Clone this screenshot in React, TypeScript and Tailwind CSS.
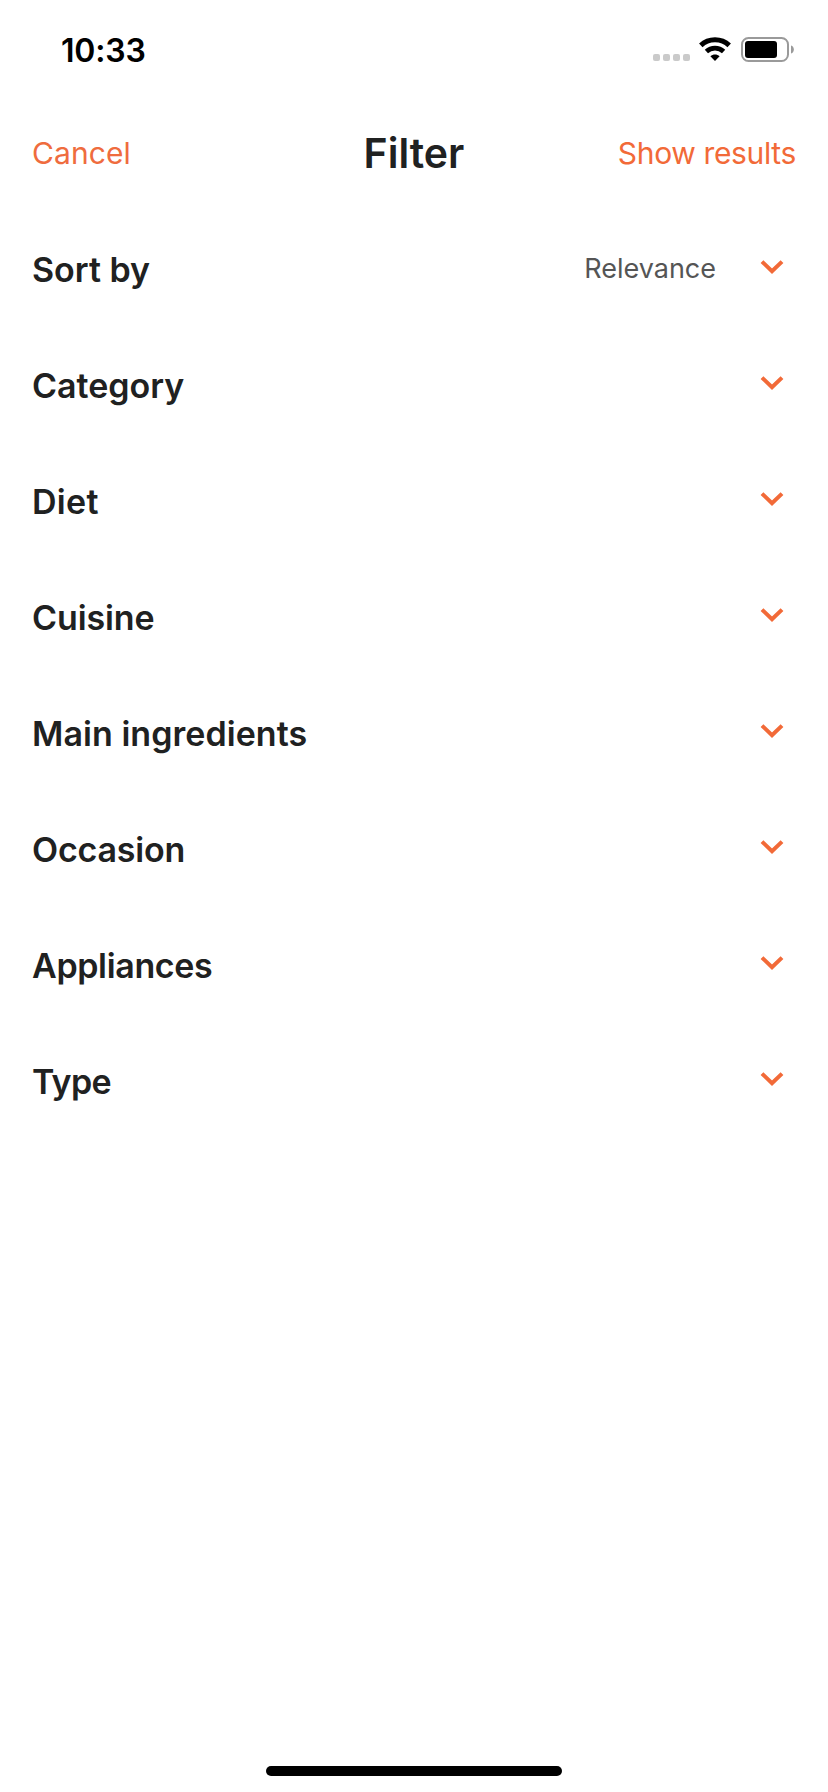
const filters = [
  { label: "Sort by", value: "Relevance", tracking: "tracking-normal" },
  { label: "Category", tracking: "tracking-normal" },
  { label: "Diet", tracking: "tracking-[0.3px]" },
  { label: "Cuisine", tracking: "tracking-[-0.1px]" },
  { label: "Main ingredients", tracking: "tracking-[0.05px]" },
  { label: "Occasion", tracking: "tracking-[-0.2px]" },
  { label: "Appliances", tracking: "tracking-[-0.35px]" },
  { label: "Type", tracking: "tracking-[-0.7px]" },
];

function WifiIcon() {
  return (
    <svg width="32" height="24" viewBox="0 0 32 24" fill="none">
      <path d="M1.8 8.4C9.6 0.9 22.4 0.9 30.2 8.4" stroke="#000" strokeWidth="5" />
      <path d="M7.4 14.4C12.2 10 19.8 10 24.6 14.4" stroke="#000" strokeWidth="4.8" />
      <path d="M11.4 19.2C14 16.8 18 16.8 20.6 19.2L16 24Z" fill="#000" />
    </svg>
  );
}

function BatteryIcon() {
  return (
    <svg width="53" height="25" viewBox="0 0 53 25" fill="none">
      <rect x="1" y="1" width="46" height="23" rx="6.5" stroke="#9a9a9a" strokeWidth="2" />
      <rect x="4" y="4" width="32" height="17" rx="3" fill="#000" />
      <path d="M50 8.5C53.8 9.6 53.8 15.4 50 16.5Z" fill="#9a9a9a" />
    </svg>
  );
}

function ChevronIcon() {
  return (
    <svg width="24" height="16" viewBox="0 0 24 16" fill="none">
      <path d="M2 2.6L12 12.2L22 2.6" stroke="#f26a38" strokeWidth="4" />
    </svg>
  );
}

function StatusBar() {
  return (
    <div className="flex h-[99px] items-center justify-between pl-[61px] pr-[34px]">
      <span className="pt-[3px] text-[32px] font-semibold leading-none tracking-[-0.2px] text-black">
        10:33
      </span>
      <div className="flex h-[25px] items-end">
        <div className="mr-[9px] flex gap-[3px] pb-px">
          {[0, 1, 2, 3].map((dot) => (
            <div key={dot} className="size-[7px] rounded-[2px] bg-[#cacaca]" />
          ))}
        </div>
        <div className="mr-[10px] self-start">
          <WifiIcon />
        </div>
        <BatteryIcon />
      </div>
    </div>
  );
}

export default function App() {
  return (
    <div className="flex h-[1792px] w-[828px] flex-col bg-white font-['Inter',sans-serif] text-[#202121]">
      <StatusBar />

      {/* Header */}
      <header className="grid h-[113px] grid-cols-3 items-start px-8 pt-[29px] leading-[50px]">
        <button className="text-left text-[30px] tracking-[0.1px] text-[#ef6c3e]">Cancel</button>
        <h1 className="text-center text-[41px] font-semibold">Filter</h1>
        <button className="whitespace-nowrap text-right text-[30px] tracking-[-0.35px] text-[#f26a38]">
          Show results
        </button>
      </header>

      {/* Filter sections */}
      <ul className="flex-1">
        {filters.map((filter) => (
          <li key={filter.label} className="flex h-[116px] items-center pl-8 pr-11">
            <span className={`flex-1 text-[34px] font-semibold leading-10 ${filter.tracking}`}>
              {filter.label}
            </span>
            {filter.value && (
              <span className="mr-[44px] pb-0.5 text-[27px] leading-10 text-[#555]">
                {filter.value}
              </span>
            )}
            <div className="pb-[7px]">
              <ChevronIcon />
            </div>
          </li>
        ))}
      </ul>

      {/* Home indicator */}
      <div className="mb-4 h-[10px] w-[296px] self-center rounded-full bg-black" />
    </div>
  );
}
